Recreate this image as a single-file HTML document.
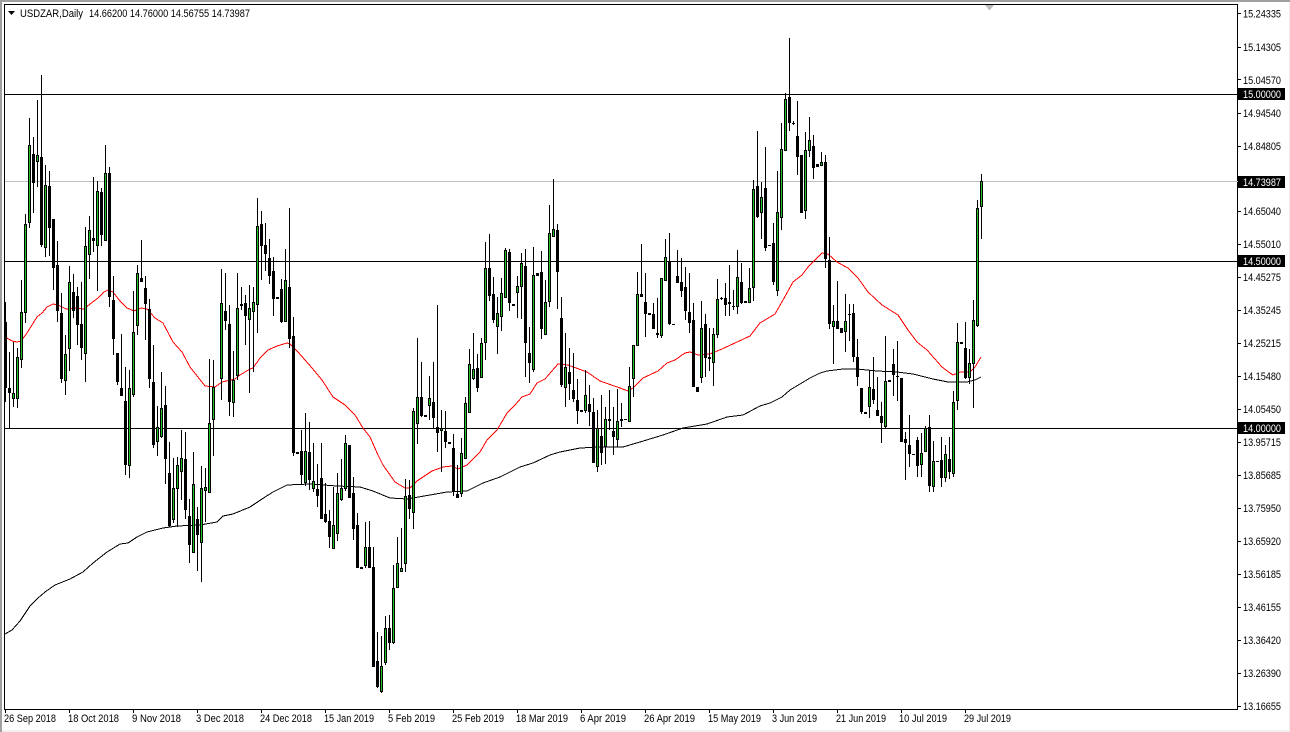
<!DOCTYPE html>
<html><head><meta charset="utf-8"><title>USDZAR,Daily</title>
<style>
html,body{margin:0;padding:0;background:#fff;width:1290px;height:732px;overflow:hidden}
svg{position:absolute;left:0;top:0;display:block}
text{font-family:"Liberation Sans",sans-serif;font-size:11px;fill:#000}
</style></head><body>
<svg width="1290" height="732" viewBox="0 0 1290 732" xmlns="http://www.w3.org/2000/svg">
<rect width="1290" height="732" fill="#fff"/>
<rect x="0" y="0" width="1290" height="2" fill="#a0a0a0"/>
<rect x="0" y="0" width="2" height="732" fill="#a0a0a0"/>
<rect x="2" y="730" width="1288" height="2" fill="#f0f0f0"/>
<rect x="1289" y="2" width="1" height="730" fill="#f0f0f0"/>
<rect x="4.5" y="4.5" width="1233" height="705" fill="#fff" stroke="#000" shape-rendering="crispEdges"/>
<polygon points="985,5 994,5 990,10 989,10" fill="#bdbdbd"/>
<g shape-rendering="crispEdges" stroke="#000" fill="none">
<path d="M5 94.5H1238M5 261.5H1238M5 428.5H1238"/>
<path d="M5 181.5H1238" stroke="#c0c0c0"/>
</g>
<path fill="none" stroke="#000" shape-rendering="crispEdges" d="M5 634L12 630L20 621L30 606L38 598L45 592L55 585L70 579L83 572L93 563L107 552L120 544L128 543L137 537L147 532L163 528L177 526L200 525L217 522L223 516L233 514L250 507L262 499L273 492L287 485L310 484L337 486L360 487L373 491L390 498L407 499L430 495L447 492L467 491L483 483L500 477L520 467L533 463L550 455L560 452L580 448L600 447L623 447L640 442L663 435L683 428L707 424L727 417L743 415L760 406L770 403L782 397L790 390L800 384L810 378L820 373L827 371L843 369L857 369L877 371L897 372L913 374L933 379L948 382L967 382L975 380L981 377"/>
<path fill="none" stroke="#ff0000" shape-rendering="crispEdges" d="M5 337L12 341L17 342L21 341L27 333L37 317L42 313L47 307L53 304L58 305L66 309L75 308L84 309L90 304L98 298L104 292L108 290L113 292L120 301L127 308L134 311L141 308L147 309L155 318L163 323L173 342L182 352L190 367L205 386L215 387L222 382L235 379L240 375L250 369L253 368L260 358L268 350L277 346L287 343L290 344L298 352L312 368L322 380L333 397L345 405L355 415L363 428L370 437L378 455L383 465L395 482L405 488L410 488L417 481L432 471L443 467L452 466L458 469L467 465L480 452L487 440L497 430L500 425L507 413L515 405L522 397L530 394L537 383L545 379L558 364L568 365L587 372L600 381L620 388L628 391L633 388L643 378L658 371L667 363L675 360L685 353L690 352L698 355L710 354L722 349L737 342L750 336L760 323L775 314L783 300L793 282L802 275L808 267L822 253L828 254L837 262L848 268L858 278L868 292L882 305L898 315L908 330L917 342L927 350L942 367L950 373L953 375L960 372L970 372L975 367L981 357"/>
<path transform="translate(.5 0)" shape-rendering="crispEdges" fill="none" stroke="#000" d="M5 302V402M9 352V428M13 342V407M17 348V408M21 280V368M25 214V323M29 118V228M33 137V213M37 100V187M41 75V247M45 165V257M49 171V256M53 219V290M57 241V322M61 293V383M65 335V395M69 266V371M73 274V318M77 287V345M81 282V360M85 227V382M89 216V279M93 177V252M97 181V291M101 188V246M105 145V241M109 167V307M113 276V355M117 353V385M121 334V396M125 367V475M129 370V478M133 291V397M137 265V335M141 240V282M145 276V340M149 299V388M153 345V448M157 406V456M161 372V438M165 386V484M169 442V527M173 458V523M177 457V527M181 430V500M185 432V519M189 499V563M193 452V553M197 507V571M201 466V582M205 468V522M209 359V493M213 360V456M221 269V400M225 273V330M229 305V416M233 351V417M237 273V380M241 287V310M245 295V345M249 285V393M253 287V372M257 198V333M261 211V280M265 223V271M269 239V284M273 257V316M281 279V323M285 249V322M289 208V348M293 317V456M301 430V485M305 413V486M309 422V490M313 443V492M317 464V507M321 443V519M325 483V523M329 510V548M333 487V549M337 473V541M341 459V501M345 435V491M349 445V498M353 477V540M357 513V568M365 522V568M369 521V568M373 547V667M377 632V688M381 636V693M385 616V665M389 615V650M393 565V644M397 537V588M401 528V572M405 479V572M409 480V519M413 408V529M417 338V444M421 362V417M429 376V420M433 362V428M437 305V452M441 410V472M445 411V448M453 434V496M457 465V498M461 438V497M465 397V459M469 349V413M473 333V380M477 354V392M481 338V378M485 242V360M489 234V301M493 277V323M497 297V354M501 278V331M505 248V298M509 249V311M517 276V318M521 253V319M525 249V377M529 327V383M533 247V372M541 251V339M545 280V335M549 205V307M553 179V237M557 224V309M561 297V387M565 333V407M569 348V400M573 353V402M577 379V424M585 370V413M589 385V426M593 398V463M597 410V472M601 395V465M605 407V464M609 390V430M613 407V455M617 389V447M621 403V427M629 367V422M633 345V397M637 272V346M641 244V297M645 273V337M653 303V329M657 298V338M661 278V338M665 239V281M669 233V325M677 250V283M681 258V297M685 267V320M689 273V333M693 303V387M701 301V383M705 314V377M709 328V371M713 328V386M717 279V338M721 297V300M725 283V316M729 265V316M733 290V310M737 250V314M741 263V304M749 268V303M753 180V301M757 131V218M761 182V239M765 147V251M773 223V285M777 171V296M781 123V230M785 93V151M789 38V131M793 121V125M797 101V175M801 155V213M805 132V219M809 117V157M813 135V179M821 152V166M825 155V268M829 237V329M833 305V364M837 281V329M845 294V352M849 304V341M853 304V362M857 339V386M861 388V414M869 370V418M873 357V404M877 377V416M881 402V443M885 336V428M893 349V396M897 341V401M901 378V442M905 432V480M909 415V467M917 437V477M921 433V477M925 426V452M929 415V492M933 441V492M941 437V487M945 445V482M949 437V479M953 391V477M957 323V410M965 322V379M969 349V384M973 300V408M977 200V327M981 174V239"/>
<path transform="translate(.5 0)" shape-rendering="crispEdges" fill="none" stroke="#000" stroke-width="3" d="M5 322V388M9 388V393M13 393V399M17 357V399M21 312V360M25 224V313M29 145V223M33 154V183M37 155V162M41 157V245M45 185V248M49 186V228M53 219V268M57 265V311M61 313V379M65 354V381M69 282V349M73 292V311M77 296V325M81 324V348M85 246V354M89 230V255M93 238V241M97 191V246M101 192V235M105 173V241M109 173V297M113 300V339M117 353V382M121 388V396M125 401V465M129 388V466M133 332V395M137 273V326M141 278V282M145 288V304M149 309V379M153 382V445M157 427V442M161 408V437M165 405V459M169 473V526M173 488V520M177 465V489M181 458V472M185 459V510M189 516V545M193 484V553M197 519V535M201 488V543M205 487V491M209 423V493M213 387V420M221 303V379M225 311V321M229 324V402M233 380V403M237 308V376M241 304V306M245 303V316M249 308V320M253 302V312M257 226V305M261 224V246M265 245V254M269 258V276M273 271V299M277 297V299M281 289V322M285 280V322M289 287V339M293 336V453M297 452V454M301 451V475M305 451V483M309 452V480M313 481V489M317 489V496M321 478V519M325 514V522M329 521V537M333 525V549M337 493V534M341 488V500M345 443V489M349 445V498M353 493V529M357 525V568M361 567V569M365 547V566M369 547V568M373 567V667M377 661V687M381 666V692M385 628V663M389 628V643M393 588V643M397 563V588M401 568V572M405 496V564M409 495V509M413 411V513M417 397V424M421 397V416M425 415V417M429 398V406M433 402V418M437 427V433M441 428V431M445 431V442M449 442V444M453 448V491M457 494V498M461 453V494M465 403V459M469 364V413M473 369V379M477 368V388M481 343V378M485 268V343M489 268V296M493 294V320M497 313V327M501 293V317M505 250V298M509 252V303M513 304V306M517 286V293M521 263V287M525 266V343M529 353V363M533 275V370M537 273V276M541 272V329M545 302V335M549 233V302M553 229V237M557 230V272M561 318V385M565 367V388M569 372V384M573 390V399M577 400V411M581 410V412M585 395V411M589 404V412M593 412V463M597 428V467M601 436V453M605 419V447M609 419V421M613 431V437M617 421V440M621 419V421M625 419V420M629 386V422M633 345V379M637 294V346M641 294V297M645 302V314M649 313V315M653 314V329M657 333V335M661 278V336M665 257V281M669 262V324M673 324V325M677 276V283M681 282V291M685 287V311M689 312V323M693 320V387M697 387V392M701 328V378M705 324V358M709 357V359M713 334V363M717 299V335M721 298V299M725 298V305M729 302V304M733 306V307M737 277V307M741 282V303M745 301V303M749 288V303M753 189V288M757 186V217M761 197V213M765 188V248M769 245V246M773 243V282M777 212V291M781 149V218M785 99V151M789 97V123M793 123V124M797 136V157M801 155V213M805 150V211M809 140V151M813 146V168M817 164V167M821 162V166M825 162V259M829 260V324M833 321V327M837 321V329M841 328V333M845 321V332M849 314V315M853 313V357M857 357V377M861 388V412M865 412V414M869 387V407M873 389V400M877 410V416M881 416V423M885 381V427M889 380V382M893 364V375M897 376V377M901 378V442M905 439V443M909 445V454M913 454V455M917 440V466M921 453V465M925 428V452M929 427V486M933 461V487M937 461V462M941 460V478M945 454V478M949 459V472M953 402V474M957 342V401M961 342V344M965 348V378M969 363V378M973 320V364M977 208V326M981 181V207"/>
<path transform="translate(.5 0)" shape-rendering="crispEdges" fill="none" stroke="#22c022" d="M13 394V398M17 358V398M21 313V359M25 225V312M29 146V222M37 156V161M45 186V247M65 355V380M69 283V348M85 247V353M89 231V254M97 192V245M105 174V240M129 389V465M133 333V394M137 274V325M157 428V441M161 409V436M173 489V519M177 466V488M181 459V471M193 485V552M201 489V542M205 488V490M209 424V492M213 388V419M221 304V378M233 381V402M237 309V375M249 309V319M253 303V311M257 227V304M285 281V321M305 452V482M313 482V488M333 526V548M337 494V533M341 489V499M345 444V488M365 548V565M381 667V691M385 629V662M393 589V642M397 564V587M401 569V571M405 497V563M413 412V512M417 398V423M429 399V405M441 429V430M461 454V493M465 404V458M469 365V412M473 370V378M481 344V377M485 269V342M497 314V326M501 294V316M505 251V297M517 287V292M521 264V286M533 276V369M545 303V334M549 234V301M553 230V236M565 368V387M585 396V410M597 429V466M605 420V446M617 422V439M629 387V421M633 346V378M637 295V345M661 279V335M665 258V280M701 329V377M713 335V362M717 300V334M737 278V306M749 289V302M753 190V287M761 198V212M777 213V290M781 150V217M785 100V150M805 151V210M809 141V150M821 163V165M833 322V326M845 322V331M869 388V406M885 382V426M921 454V464M925 429V451M933 462V486M945 455V477M953 403V473M957 343V400M969 364V377M973 321V363M977 209V325M981 182V206"/>
<path shape-rendering="crispEdges" stroke="#000" fill="none" d="M1238 13.5H1241M1238 47.5H1241M1238 79.5H1241M1238 113.5H1241M1238 146.5H1241M1238 211.5H1241M1238 244.5H1241M1238 277.5H1241M1238 310.5H1241M1238 343.5H1241M1238 376.5H1241M1238 409.5H1241M1238 442.5H1241M1238 475.5H1241M1238 508.5H1241M1238 541.5H1241M1238 574.5H1241M1238 607.5H1241M1238 640.5H1241M1238 673.5H1241M1238 706.5H1241M5.5 709V713M69.5 709V713M133.5 709V713M197.5 709V713M261.5 709V713M325.5 709V713M389.5 709V713M453.5 709V713M517.5 709V713M581.5 709V713M645.5 709V713M709.5 709V713M773.5 709V713M837.5 709V713M901.5 709V713M965.5 709V713"/>
<polygon points="8,11 15,11 11.5,15" fill="#000"/>
<text x="20" y="17" textLength="63" lengthAdjust="spacingAndGlyphs">USDZAR,Daily</text>
<text x="89" y="17" textLength="161" lengthAdjust="spacingAndGlyphs">14.66200 14.76000 14.56755 14.73987</text>
<g>
<text x="1243" y="17.5" textLength="38" lengthAdjust="spacingAndGlyphs">15.24335</text>
<text x="1243" y="51" textLength="38" lengthAdjust="spacingAndGlyphs">15.14305</text>
<text x="1243" y="84" textLength="38" lengthAdjust="spacingAndGlyphs">15.04570</text>
<text x="1243" y="117" textLength="38" lengthAdjust="spacingAndGlyphs">14.94540</text>
<text x="1243" y="150" textLength="38" lengthAdjust="spacingAndGlyphs">14.84805</text>
<text x="1243" y="215" textLength="38" lengthAdjust="spacingAndGlyphs">14.65040</text>
<text x="1243" y="248" textLength="38" lengthAdjust="spacingAndGlyphs">14.55010</text>
<text x="1243" y="281" textLength="38" lengthAdjust="spacingAndGlyphs">14.45275</text>
<text x="1243" y="314" textLength="38" lengthAdjust="spacingAndGlyphs">14.35245</text>
<text x="1243" y="347" textLength="38" lengthAdjust="spacingAndGlyphs">14.25215</text>
<text x="1243" y="380" textLength="38" lengthAdjust="spacingAndGlyphs">14.15480</text>
<text x="1243" y="413" textLength="38" lengthAdjust="spacingAndGlyphs">14.05450</text>
<text x="1243" y="446" textLength="38" lengthAdjust="spacingAndGlyphs">13.95715</text>
<text x="1243" y="479" textLength="38" lengthAdjust="spacingAndGlyphs">13.85685</text>
<text x="1243" y="512" textLength="38" lengthAdjust="spacingAndGlyphs">13.75950</text>
<text x="1243" y="545" textLength="38" lengthAdjust="spacingAndGlyphs">13.65920</text>
<text x="1243" y="578" textLength="38" lengthAdjust="spacingAndGlyphs">13.56185</text>
<text x="1243" y="611" textLength="38" lengthAdjust="spacingAndGlyphs">13.46155</text>
<text x="1243" y="644" textLength="38" lengthAdjust="spacingAndGlyphs">13.36420</text>
<text x="1243" y="677" textLength="38" lengthAdjust="spacingAndGlyphs">13.26390</text>
<text x="1243" y="710" textLength="38" lengthAdjust="spacingAndGlyphs">13.16655</text>
</g>
<rect x="1238" y="88" width="47" height="12" fill="#000"/>
<rect x="1238" y="176" width="47" height="12" fill="#000"/>
<rect x="1238" y="255" width="47" height="12" fill="#000"/>
<rect x="1238" y="422" width="47" height="12" fill="#000"/>
<text x="1243" y="98" textLength="38" lengthAdjust="spacingAndGlyphs" style="fill:#fff">15.00000</text>
<text x="1243" y="186" textLength="38" lengthAdjust="spacingAndGlyphs" style="fill:#fff">14.73987</text>
<text x="1243" y="265" textLength="38" lengthAdjust="spacingAndGlyphs" style="fill:#fff">14.50000</text>
<text x="1243" y="432" textLength="38" lengthAdjust="spacingAndGlyphs" style="fill:#fff">14.00000</text>
<g>
<text x="4" y="722" textLength="52" lengthAdjust="spacingAndGlyphs">26 Sep 2018</text>
<text x="68" y="722" textLength="51" lengthAdjust="spacingAndGlyphs">18 Oct 2018</text>
<text x="132" y="722" textLength="49" lengthAdjust="spacingAndGlyphs">9 Nov 2018</text>
<text x="196" y="722" textLength="48" lengthAdjust="spacingAndGlyphs">3 Dec 2018</text>
<text x="260" y="722" textLength="52" lengthAdjust="spacingAndGlyphs">24 Dec 2018</text>
<text x="324" y="722" textLength="50" lengthAdjust="spacingAndGlyphs">15 Jan 2019</text>
<text x="388" y="722" textLength="47" lengthAdjust="spacingAndGlyphs">5 Feb 2019</text>
<text x="452" y="722" textLength="52" lengthAdjust="spacingAndGlyphs">25 Feb 2019</text>
<text x="516" y="722" textLength="52" lengthAdjust="spacingAndGlyphs">18 Mar 2019</text>
<text x="580" y="722" textLength="46" lengthAdjust="spacingAndGlyphs">6 Apr 2019</text>
<text x="644" y="722" textLength="51" lengthAdjust="spacingAndGlyphs">26 Apr 2019</text>
<text x="708" y="722" textLength="53" lengthAdjust="spacingAndGlyphs">15 May 2019</text>
<text x="772" y="722" textLength="45" lengthAdjust="spacingAndGlyphs">3 Jun 2019</text>
<text x="836" y="722" textLength="50" lengthAdjust="spacingAndGlyphs">21 Jun 2019</text>
<text x="899" y="722" textLength="48" lengthAdjust="spacingAndGlyphs">10 Jul 2019</text>
<text x="964" y="722" textLength="47" lengthAdjust="spacingAndGlyphs">29 Jul 2019</text>
</g>
</svg>
</body></html>
